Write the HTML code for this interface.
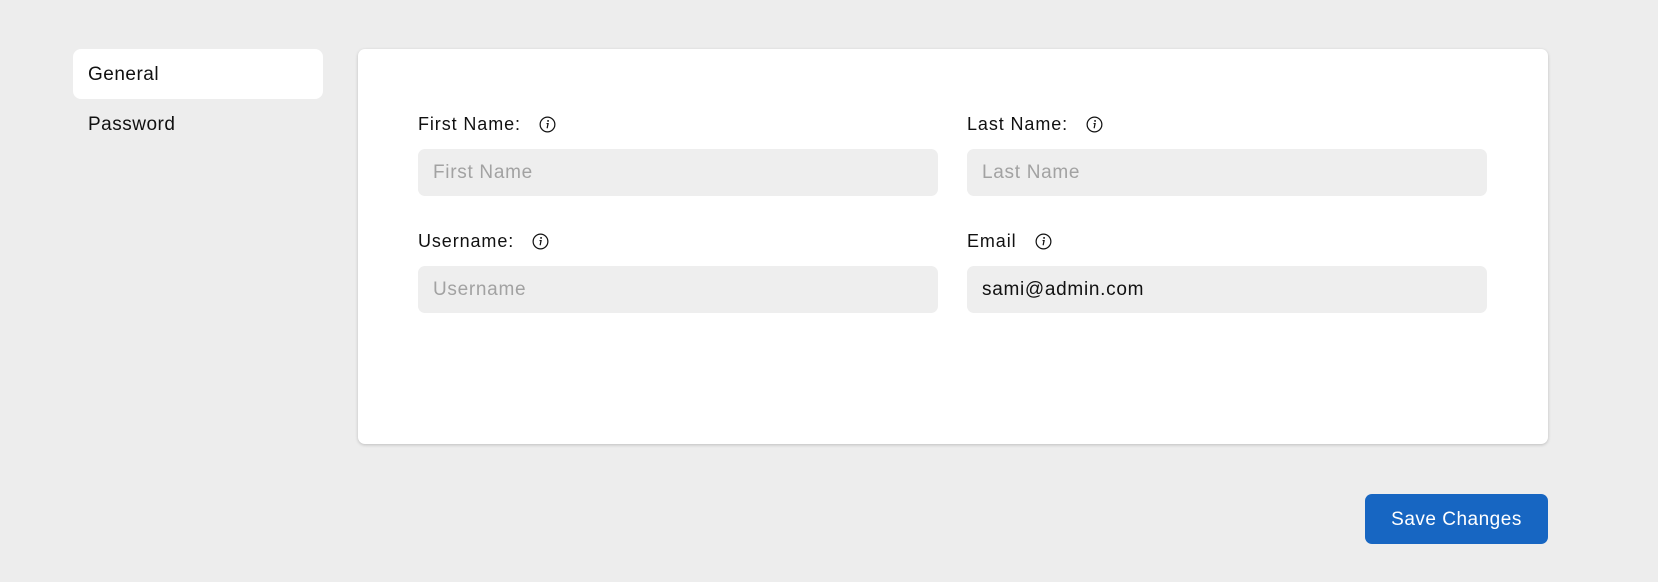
<!DOCTYPE html>
<html><head><style>
body{margin:0;background:#ededed;width:1658px;height:582px;font-family:"Liberation Sans",sans-serif;position:relative;overflow:hidden}
.side{position:absolute;left:73px;width:250px;height:50px;border-radius:8px;font-size:19px;color:#111;line-height:52px;padding-left:15px;box-sizing:border-box;letter-spacing:0.5px}
.card{position:absolute;left:358px;top:49px;width:1190px;height:395px;background:#fff;border-radius:7px;box-shadow:0 1px 3px rgba(0,0,0,.2)}
.lbl{position:absolute;font-size:18px;color:#111;display:flex;align-items:center;letter-spacing:0.9px}
.lbl svg{margin-left:18px}
.in{position:absolute;width:520px;height:47px;background:#eeeeee;border-radius:7px;font-size:19px;line-height:47px;padding-left:15px;box-sizing:border-box;color:#a2a2a2;letter-spacing:0.7px}
.btn{position:absolute;left:1365px;top:494px;width:183px;height:50px;background:#1766c2;border-radius:7px;color:#fff;font-size:19px;text-align:center;line-height:52px;letter-spacing:0.5px}
</style></head><body>
<div class="side" style="top:49px;background:#fff">General</div>
<div class="side" style="top:99px">Password</div>
<div class="card"></div>
<div class="lbl" style="left:418px;top:114px">First Name:<svg width="17" height="17" viewBox="0 0 18 18"><circle cx="9" cy="9" r="7.8" fill="none" stroke="#111" stroke-width="1.3"/><circle cx="9.6" cy="5.2" r="1" fill="#111"/><path d="M8 8h1.6l-1 5" fill="none" stroke="#111" stroke-width="1.3"/></svg></div>
<div class="lbl" style="left:967px;top:114px">Last Name:<svg width="17" height="17" viewBox="0 0 18 18"><circle cx="9" cy="9" r="7.8" fill="none" stroke="#111" stroke-width="1.3"/><circle cx="9.6" cy="5.2" r="1" fill="#111"/><path d="M8 8h1.6l-1 5" fill="none" stroke="#111" stroke-width="1.3"/></svg></div>
<div class="in" style="left:418px;top:149px">First Name</div>
<div class="in" style="left:967px;top:149px">Last Name</div>
<div class="lbl" style="left:418px;top:231px">Username:<svg width="17" height="17" viewBox="0 0 18 18"><circle cx="9" cy="9" r="7.8" fill="none" stroke="#111" stroke-width="1.3"/><circle cx="9.6" cy="5.2" r="1" fill="#111"/><path d="M8 8h1.6l-1 5" fill="none" stroke="#111" stroke-width="1.3"/></svg></div>
<div class="lbl" style="left:967px;top:231px">Email<svg width="17" height="17" viewBox="0 0 18 18"><circle cx="9" cy="9" r="7.8" fill="none" stroke="#111" stroke-width="1.3"/><circle cx="9.6" cy="5.2" r="1" fill="#111"/><path d="M8 8h1.6l-1 5" fill="none" stroke="#111" stroke-width="1.3"/></svg></div>
<div class="in" style="left:418px;top:266px">Username</div>
<div class="in" style="left:967px;top:266px;color:#111">sami@admin.com</div>
<div class="btn">Save Changes</div>
</body></html>
